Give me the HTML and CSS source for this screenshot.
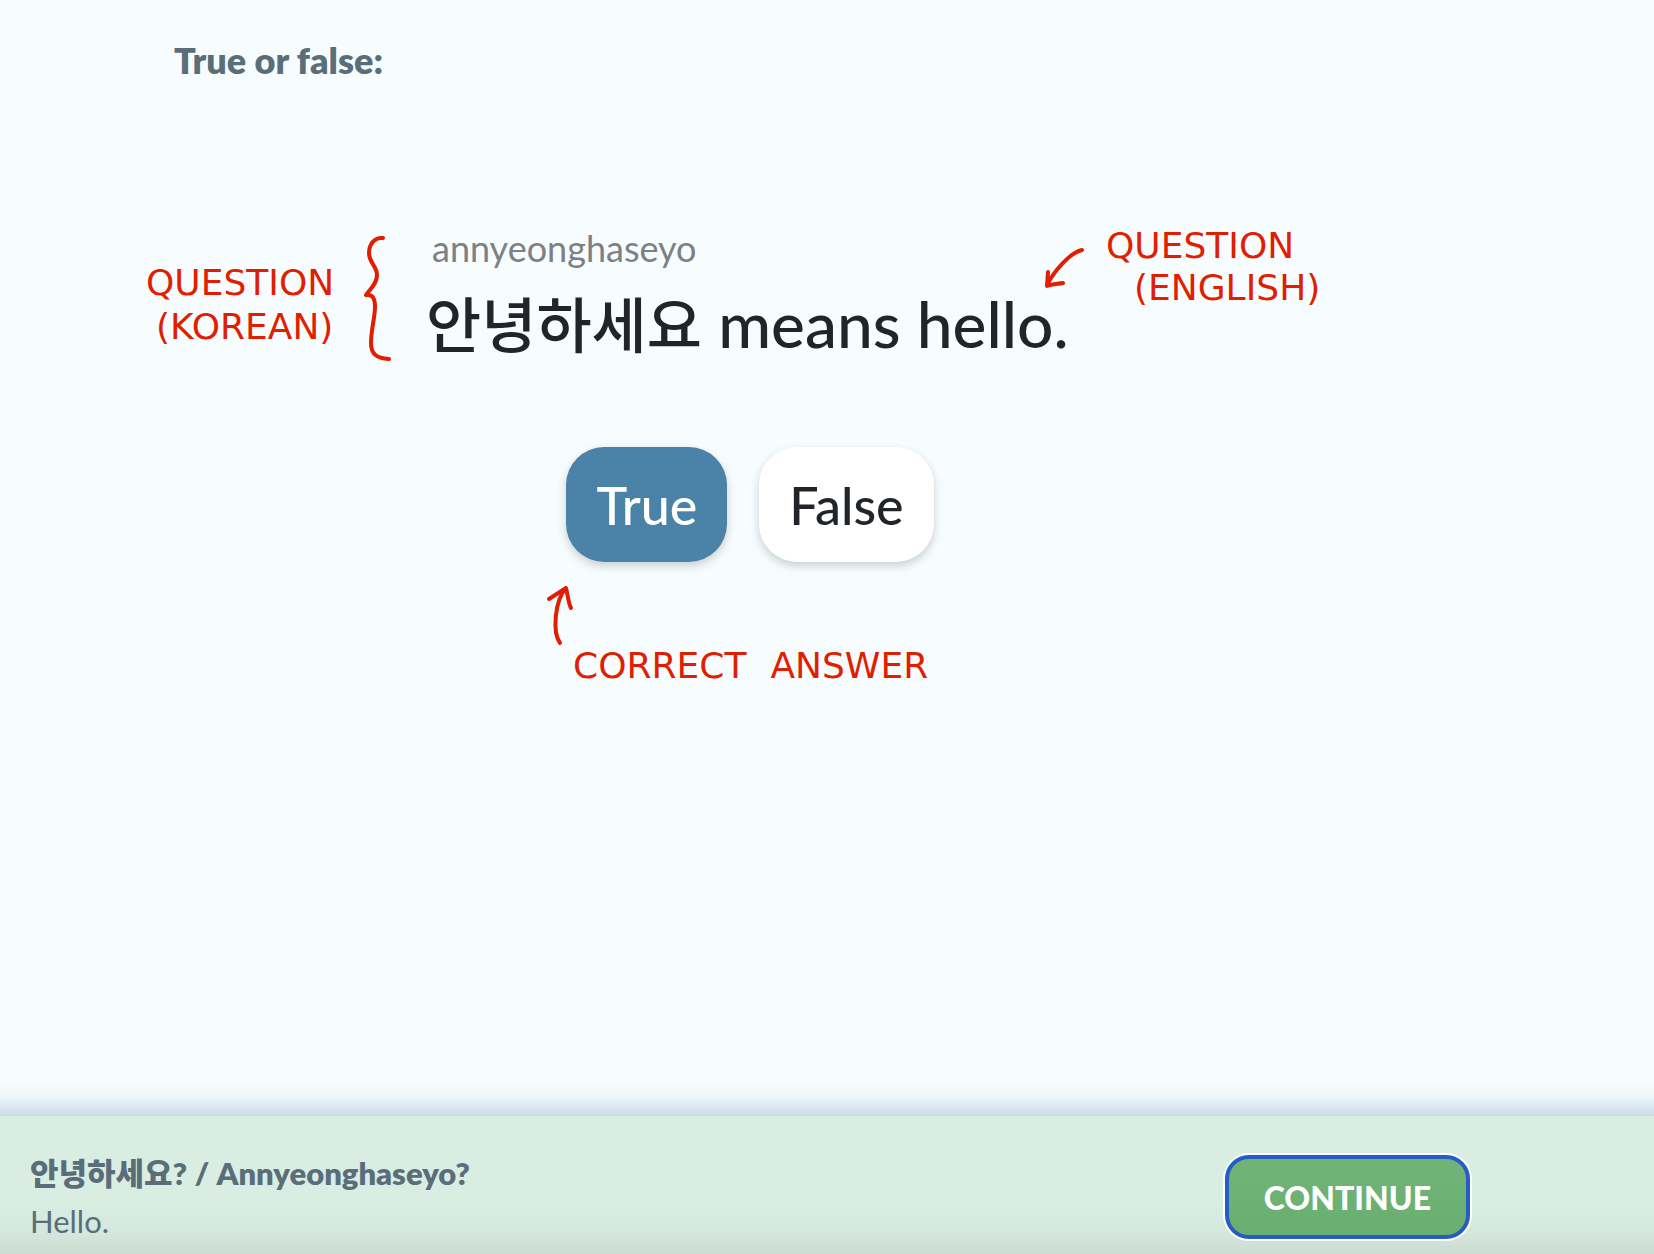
FILE: index.html
```html
<!DOCTYPE html>
<html lang="en">
<head>
<meta charset="utf-8">
<meta name="viewport" content="width=device-width, initial-scale=1">
<title>True or false</title>
<link rel="stylesheet" href="styles.css">
</head>
<body>
<main class="lesson">
  <h1 class="prompt">True or false:</h1>
  <section class="exercise">
    <div class="question">
      <p class="romanized">annyeonghaseyo</p>
      <p class="sentence"><span class="hangul" lang="ko">안녕하세요</span> means hello.</p>
    </div>
    <div class="answers">
      <button class="answer answer-selected" type="button" aria-pressed="true">True</button>
      <button class="answer" type="button" aria-pressed="false">False</button>
    </div>

    <p class="note note-korean">QUESTION<br><span class="note-indent">(KOREAN)</span></p>
    <svg class="mark mark-brace" width="32" height="132" viewBox="362 232 32 132" aria-hidden="true"><path d="M383 238C374 237 369 245 369 253C369 263 377 266 377 275C377 284 370 289 366 295C373 294 375 299 375 307C375 317 371 330 371 343C371 354 376 358 389 359"/></svg>
    <p class="note note-english">QUESTION<br><span class="note-indent">(ENGLISH)</span></p>
    <svg class="mark mark-english" width="44" height="46" viewBox="1042 246 44 46" aria-hidden="true"><path d="M1082 250C1069 253 1053 273 1047 285M1048 272L1047 286C1052 284 1058 284 1063 283"/></svg>
    <svg class="mark mark-answer" width="32" height="64" viewBox="544 584 32 64" aria-hidden="true"><path d="M560 643C552 632 555 600 566 588M549 599L566 588C568 595 568 602 571 608"/></svg>
    <p class="note note-answer"><span>CORRECT</span><span>ANSWER</span></p>
  </section>
</main>
<footer class="result">
  <div class="solution">
    <p class="solution-title"><span lang="ko">안녕하세요</span>? / Annyeonghaseyo?</p>
    <p class="solution-meaning">Hello.</p>
  </div>
  <button class="continue" type="button">CONTINUE</button>
</footer>
</body>
</html>
```
FILE: styles.css
```css
* {
  box-sizing: border-box;
}

body {
  display: flex;
  flex-direction: column;
  min-height: 100vh;
  margin: 0;
  background: #f7fcff;
  color: #212529;
  font-family: Lato, "Noto Sans CJK KR", sans-serif;
}

h1,
p {
  margin: 0;
}

button {
  font-family: inherit;
  cursor: pointer;
}

.lesson {
  flex: 1;
  padding-right: 154px;
}

.prompt {
  padding: 38px 0 0 174px;
  color: #5a6e7a;
  font-size: 36px;
  font-weight: 800;
  line-height: 44px;
}

.exercise {
  position: relative;
  display: flex;
  flex-direction: column;
  align-items: center;
  padding-top: 144px;
}

.question {
  min-width: 648px;
}

.romanized {
  padding-left: 6px;
  color: #7d8085;
  font-size: 36px;
  line-height: 44px;
}

.sentence {
  font-size: 64px;
  font-weight: 500;
  line-height: 108px;
}

.hangul {
  font-size: 60px;
}

.answers {
  display: flex;
  gap: 32px;
  margin-top: 68px;
}

.answer {
  height: 115px;
  padding: 0 30px;
  border: 0;
  border-radius: 38px;
  background: #fff;
  box-shadow: 0 4px 10px rgba(0, 0, 0, 0.18);
  color: #212529;
  font-size: 52px;
  font-weight: 500;
}

.answer-selected {
  background: #4a83a7;
  color: #fff;
}

.note,
.mark {
  position: absolute;
}

.note {
  color: #e11e00;
  font-family: "DejaVu Sans", sans-serif;
  font-size: 36px;
  line-height: 44px;
}

.note-korean {
  top: 179px;
  left: calc(50% - 604px);
}

.note-korean .note-indent {
  padding-left: 10px;
}

.note-english {
  top: 143px;
  left: calc(50% + 356px);
  line-height: 42px;
}

.note-english .note-indent {
  padding-left: 28px;
}

.note-answer {
  display: flex;
  gap: 24px;
  top: 562px;
  left: calc(50% - 177px);
}

.mark {
  fill: none;
  stroke: #e11e00;
  stroke-width: 4;
  stroke-linecap: round;
  stroke-linejoin: round;
}

.mark-brace {
  top: 150px;
  left: calc(50% - 388px);
}

.mark-english {
  top: 164px;
  left: calc(50% + 292px);
}

.mark-answer {
  top: 502px;
  left: calc(50% - 206px);
}

.result {
  position: relative;
  display: flex;
  align-items: flex-start;
  justify-content: space-between;
  min-height: 138px;
  padding: 33px 184px 9px 30px;
  background: linear-gradient(to top, #cbddd2, #d4e7dc 20px, #daede2 50px);
  color: #5a6e7a;
}

.result::before {
  content: "";
  position: absolute;
  right: 0;
  bottom: 100%;
  left: 0;
  height: 36px;
  background: linear-gradient(to top, #cadce8, #e0ecf4 12px, #f1f8fc 22px, #f7fcff);
}

.solution {
  font-size: 31px;
  line-height: 48px;
}

.solution-title {
  font-weight: 800;
}

.continue {
  height: 84px;
  margin-top: 6px;
  padding: 0 35px;
  border: 4px solid #265dc4;
  border-radius: 24px;
  background: linear-gradient(#70b577, #6aae70);
  box-shadow: 0 0 0 2px #fff;
  color: #fff;
  font-size: 32px;
  font-weight: 900;
}
```
